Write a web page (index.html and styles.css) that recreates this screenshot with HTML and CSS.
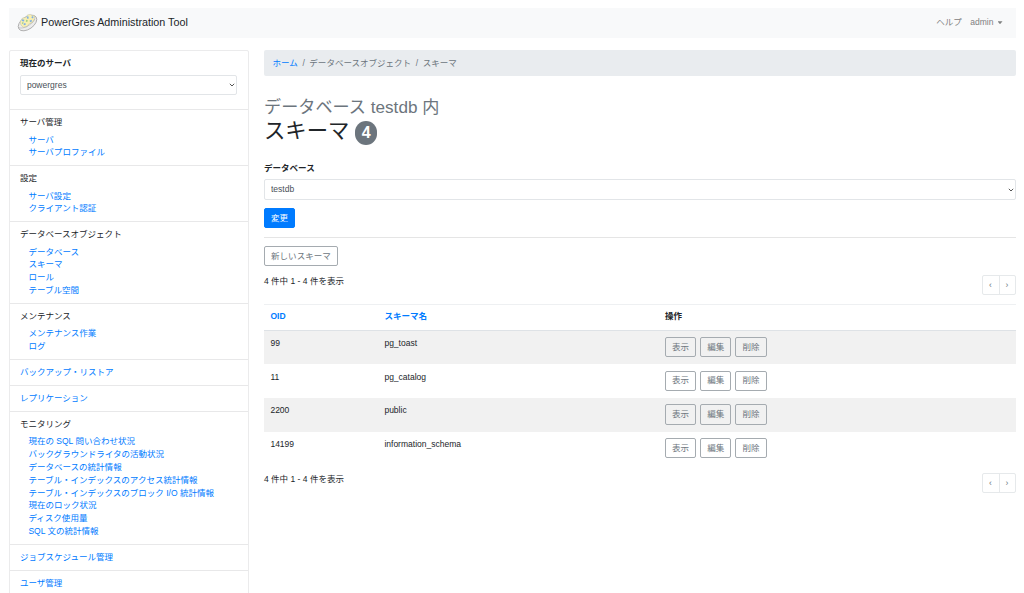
FILE: index.html
```
<!DOCTYPE html>
<html lang="ja">
<head>
    <meta charset="UTF-8">
    <meta name="viewport" content="width=device-width, initial-scale=1.0">
    <title>PowerGres Administration Tool</title>
    <link rel="stylesheet" href="styles.css">
</head>
<body>
    <header class="navbar">
        <a class="brand" href="#">
            <svg class="logo" viewBox="0 0 22 20">
                <ellipse cx="11" cy="10.5" rx="11" ry="6.5" transform="rotate(-35 11 10.5)" fill="#ececec" stroke="#a2a2a2" stroke-width="0.8"/>
                <path d="M3.5 8.5l2-3 4-1 1.5-2.5 3-.5 1.5 1 3 .5-.5 4.5-2 3-3.500 1-2 3-4 .5-2.500-2.500z" fill="#f8efb0" stroke="#c3c5ac" stroke-width="0.6"/>
                <g fill="none" stroke-width="1.8">
                    <path d="M5 7.500l2.500.5M11 3.500l.5 2.500M15.500 4l1.500 1M7 12l2-.5M13.500 9l2-1" stroke="#7fb0e6"/>
                    <path d="M9.500 8l1.500.5M5.500 10.300l1 .4" stroke="#9acb86"/>
                </g>
                <path d="M2 15.500c5 1.500 13-2.500 17-9.500" fill="none" stroke="#b5b5b5" stroke-width="0.7"/>
            </svg>
            <span>PowerGres Administration Tool</span>
        </a>
        <nav class="nav">
            <a href="#">ヘルプ</a>
            <a href="#" class="dropdown-toggle">admin</a>
        </nav>
    </header>

    <div class="layout">
        <aside class="sidebar">
            <div class="item">
                <label class="form-label" for="server">現在のサーバ</label>
                <div class="select server-select">
                    <select id="server"><option>powergres</option></select>
                    <svg viewBox="0 0 6 4"><path d="M0.8 0.8L3 3l2.2-2.2"/></svg>
                </div>
            </div>
            <div class="item">
                サーバ管理
                <ul>
                    <li><a href="#">サーバ</a></li>
                    <li><a href="#">サーバプロファイル</a></li>
                </ul>
            </div>
            <div class="item">
                設定
                <ul>
                    <li><a href="#">サーバ設定</a></li>
                    <li><a href="#">クライアント認証</a></li>
                </ul>
            </div>
            <div class="item">
                データベースオブジェクト
                <ul>
                    <li><a href="#">データベース</a></li>
                    <li><a href="#">スキーマ</a></li>
                    <li><a href="#">ロール</a></li>
                    <li><a href="#">テーブル空間</a></li>
                </ul>
            </div>
            <div class="item">
                メンテナンス
                <ul>
                    <li><a href="#">メンテナンス作業</a></li>
                    <li><a href="#">ログ</a></li>
                </ul>
            </div>
            <div class="item"><a href="#">バックアップ・リストア</a></div>
            <div class="item"><a href="#">レプリケーション</a></div>
            <div class="item">
                モニタリング
                <ul>
                    <li><a href="#">現在の SQL 問い合わせ状況</a></li>
                    <li><a href="#">バックグラウンドライタの活動状況</a></li>
                    <li><a href="#">データベースの統計情報</a></li>
                    <li><a href="#">テーブル・インデックスのアクセス統計情報</a></li>
                    <li><a href="#">テーブル・インデックスのブロック I/O 統計情報</a></li>
                    <li><a href="#">現在のロック状況</a></li>
                    <li><a href="#">ディスク使用量</a></li>
                    <li><a href="#">SQL 文の統計情報</a></li>
                </ul>
            </div>
            <div class="item"><a href="#">ジョブスケジュール管理</a></div>
            <div class="item"><a href="#">ユーザ管理</a></div>
        </aside>

        <main class="main">
            <div class="breadcrumb">
                <a href="#">ホーム</a><span>/</span>データベースオブジェクト<span>/</span>スキーマ
            </div>

            <h1><small>データベース testdb 内</small>スキーマ <span class="badge">4</span></h1>

            <form>
                <label class="form-label" for="database">データベース</label>
                <div class="select">
                    <select id="database"><option>testdb</option></select>
                    <svg viewBox="0 0 6 4"><path d="M0.8 0.8L3 3l2.2-2.2"/></svg>
                </div>
                <button type="button" class="btn btn-primary">変更</button>
            </form>
            <hr>

            <button type="button" class="btn">新しいスキーマ</button>
            <div class="pager">
                <span>4 件中 1 - 4 件を表示</span>
                <div class="pagination"><a href="#">‹</a><a href="#">›</a></div>
            </div>

            <table>
                <thead>
                    <tr>
                        <th class="col-oid"><a href="#">OID</a></th>
                        <th class="col-name"><a href="#">スキーマ名</a></th>
                        <th>操作</th>
                    </tr>
                </thead>
                <tbody>
                    <tr>
                        <td>99</td>
                        <td>pg_toast</td>
                        <td><div class="actions"><button class="btn">表示</button><button class="btn">編集</button><button class="btn">削除</button></div></td>
                    </tr>
                    <tr>
                        <td>11</td>
                        <td>pg_catalog</td>
                        <td><div class="actions"><button class="btn">表示</button><button class="btn">編集</button><button class="btn">削除</button></div></td>
                    </tr>
                    <tr>
                        <td>2200</td>
                        <td>public</td>
                        <td><div class="actions"><button class="btn">表示</button><button class="btn">編集</button><button class="btn">削除</button></div></td>
                    </tr>
                    <tr>
                        <td>14199</td>
                        <td>information_schema</td>
                        <td><div class="actions"><button class="btn">表示</button><button class="btn">編集</button><button class="btn">削除</button></div></td>
                    </tr>
                </tbody>
            </table>

            <div class="pager pager-bottom">
                <span>4 件中 1 - 4 件を表示</span>
                <div class="pagination"><a href="#">‹</a><a href="#">›</a></div>
            </div>
        </main>
    </div>
</body>
</html>
```
FILE: styles.css
```
* {
    box-sizing: border-box;
}

html {
    font-size: 8.533px;
}

body {
    margin: 0;
    padding: 8px 8.5px 0;
    height: 100vh;
    overflow: hidden;
    font-family: "Liberation Sans", "Noto Sans CJK JP", sans-serif;
    font-size: 1rem;
    line-height: 12.8px;
    color: #212529;
    background: #fff;
}

a {
    color: #007bff;
    text-decoration: none;
}

/* Header */
.navbar {
    display: flex;
    justify-content: space-between;
    align-items: center;
    height: 29.5px;
    padding: 0 13px 0 8.5px;
    background: #f8f9fa;
}

.brand {
    display: flex;
    align-items: center;
    gap: 3px;
    font-size: 10.75px;
    color: #212529;
}

.logo {
    width: 21px;
    height: 19px;
}

.nav {
    display: flex;
    gap: 8.5px;
}

.nav a {
    color: #7f8081;
}

.dropdown-toggle {
    display: flex;
    align-items: center;
    gap: 4px;
}

.dropdown-toggle::after {
    content: "";
    width: 5px;
    height: 3px;
    background: #7f8081;
    clip-path: polygon(0 0, 100% 0, 50% 100%);
}

.layout {
    display: flex;
    align-items: flex-start;
    gap: 15.5px;
    margin-top: 12.5px;
}

/* Sidebar */
.sidebar {
    width: 240px;
    flex-shrink: 0;
    border: 1px solid #ebebec;
    border-radius: 2px;
}

.item {
    padding: 6px 10.4px 6.33px;
    border-bottom: 1px solid #e8e8e9;
}

.item ul {
    list-style: none;
    margin: 4.4px 0 -0.13px;
    padding: 0 0 0 8.53px;
}

.form-label {
    display: block;
    margin-bottom: 4.8px;
    font-weight: bold;
}

.select {
    position: relative;
    height: 20.5px;
    margin-bottom: 8.5px;
}

.server-select {
    margin-bottom: 8px;
}

.select select {
    appearance: none;
    width: 100%;
    height: 100%;
    padding: 0 6px;
    border: 1px solid #e2e5e8;
    border-radius: 2px;
    background: #fff;
    font-family: inherit;
    font-size: 1rem;
    color: #495057;
}

.select svg {
    position: absolute;
    right: 2px;
    top: 8.5px;
    width: 6px;
    height: 4px;
    fill: none;
    stroke: #555;
}

/* Content */
.main {
    flex: 1;
}

.breadcrumb {
    height: 25.6px;
    padding: 6.8px 8.5px;
    border-radius: 2px;
    background: #e9ecef;
    color: #6c757d;
}

.breadcrumb span {
    padding: 0 4.6px;
}

h1 {
    margin: 19px 0 17px;
    font-size: 21.33px;
    font-weight: normal;
    line-height: 25.6px;
}

h1 small {
    display: block;
    font-size: 17.15px;
    line-height: 24px;
    color: #6c757d;
}

.badge {
    display: inline-block;
    padding: 4px 6.4px;
    border-radius: 12px;
    background: #6c757d;
    color: #fff;
    font-size: 16px;
    font-weight: bold;
    line-height: 16px;
    vertical-align: baseline;
}

.btn {
    display: block;
    height: 20.3px;
    padding: 0 6.1px;
    border: 1px solid #a5abb0;
    border-radius: 2px;
    background: transparent;
    font-family: inherit;
    font-size: 1rem;
    line-height: 12.8px;
    color: #6c757d;
}

.btn-primary {
    border-color: #007bff;
    background: #007bff;
    color: #fff;
}

hr {
    margin: 8.5px 0 7.8px;
    border: 0;
    border-top: 1px solid #e5e5e5;
}

.pager {
    display: flex;
    justify-content: space-between;
    align-items: flex-start;
    height: 29.3px;
    margin-top: 8.5px;
}

.pager-bottom {
    margin-top: 7.7px;
}

.pagination {
    display: flex;
    height: 20.5px;
    border: 1px solid #e6e9eb;
    border-radius: 2px;
}

.pagination a {
    width: 16px;
    line-height: 18px;
    text-align: center;
    color: #6c757d;
}

.pagination a + a {
    border-left: 1px solid #e6e9eb;
}

table {
    width: 100%;
    border-collapse: separate;
    border-spacing: 0;
    table-layout: fixed;
}

.col-oid {
    width: 114px;
}

.col-name {
    width: 280.5px;
}

th {
    height: 27px;
    padding: 5.6px 6.4px;
    border-top: 1px solid #eef0f2;
    border-bottom: 1px solid #dee2e6;
    text-align: left;
    vertical-align: top;
}

td {
    height: 33.6px;
    padding: 6.2px 6.4px 0;
    vertical-align: top;
}

tbody tr:nth-child(odd) {
    background: #f1f1f1;
}

.actions {
    display: flex;
    gap: 4px;
}
```
